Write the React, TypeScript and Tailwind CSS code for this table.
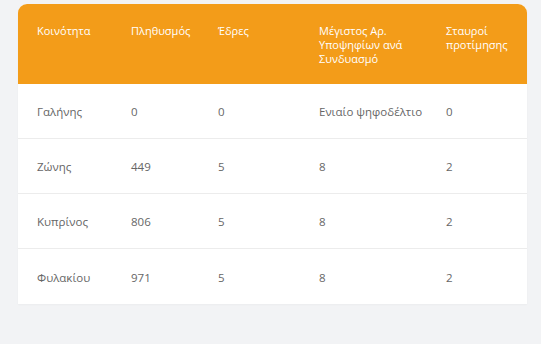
const rows = [
	["Γαλήνης", "0", "0", "Ενιαίο ψηφοδέλτιο", "0"],
	["Ζώνης", "449", "5", "8", "2"],
	["Κυπρίνος", "806", "5", "8", "2"],
	["Φυλακίου", "971", "5", "8", "2"],
];

const grid = "grid grid-cols-[94px_87px_101px_127px_1fr]";

export default function App() {
	return (
		<div className="h-[344px] w-[541px] bg-[#f2f3f5] px-[18px] pt-[4px] font-['Open_Sans',sans-serif]">
			<div className="w-[509px] overflow-hidden rounded-t-[9px] bg-white shadow-[0_1px_2px_rgba(0,0,0,0.03)]">
				<div className={`${grid} bg-[#f39c19] pt-[20px] pb-[18px] text-[11px] leading-[14px] text-white`}>
					<div className="pl-[19px]">Κοινότητα</div>
					<div className="pl-[19px]">Πληθυσμός</div>
					<div className="pl-[19px]">Έδρες</div>
					<div className="pl-[19px] pr-[4px]">
						Μέγιστος Αρ.
						<br />
						Υποψηφίων ανά Συνδυασμό
					</div>
					<div className="pl-[19px] pr-[10px]">Σταυροί προτίμησης</div>
				</div>
				{rows.map((row, i) => (
					<div
						key={row[0]}
						className={`${grid} h-[55px] items-center pt-[2px] text-[11.5px] text-[#666666] ${
							i < rows.length - 1 ? "border-b border-[#ececec]" : ""
						}`}
					>
						{row.map((cell, j) => (
							<div key={j} className="pl-[19px]">
								{cell}
							</div>
						))}
					</div>
				))}
			</div>
		</div>
	);
}
